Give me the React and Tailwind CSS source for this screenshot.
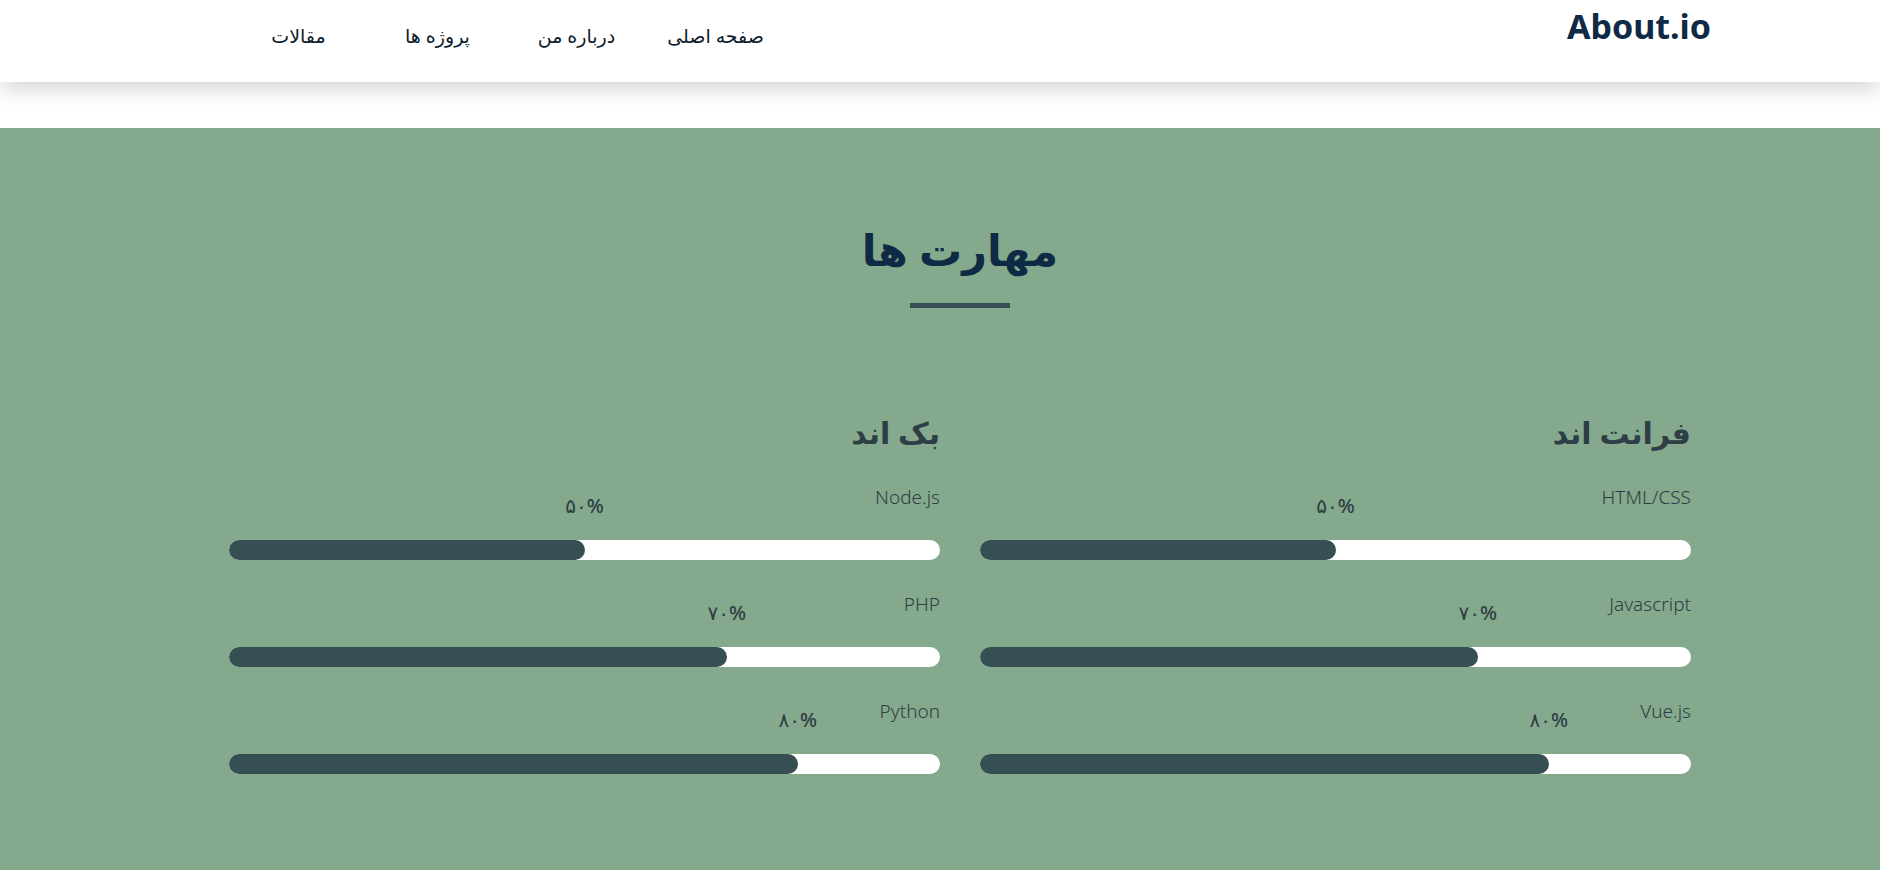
const navItems = ['صفحه اصلی', 'درباره من', 'پروژه ها', 'مقالات'];

const frontEnd = [
  { name: 'HTML/CSS', pct: 50, label: '۵۰%' },
  { name: 'Javascript', pct: 70, label: '۷۰%' },
  { name: 'Vue.js', pct: 80, label: '۸۰%' },
];

const backEnd = [
  { name: 'Node.js', pct: 50, label: '۵۰%' },
  { name: 'PHP', pct: 70, label: '۷۰%' },
  { name: 'Python', pct: 80, label: '۸۰%' },
];

function SkillBar({ name, pct, label }) {
  return (
    <div className="mb-[31px]">
      <p className="text-[19px] leading-[27px] font-light text-[#2f3e46]">{name}</p>
      <div dir="ltr" className="relative mt-[29px] h-[20px] rounded-full bg-white">
        <div className="h-full rounded-full bg-[#354f52]" style={{ width: `${pct}%` }} />
        <span
          dir="rtl"
          className="absolute top-[-49px] -translate-x-1/2 text-[20px] leading-[30px] font-medium text-[#2f3e46] whitespace-nowrap"
          style={{ left: `${pct}%` }}
        >
          {label}
        </span>
      </div>
    </div>
  );
}

function SkillColumn({ title, skills }) {
  return (
    <div>
      <h3 className="text-[30px] leading-[48px] font-bold text-[#2f3e46] mb-[27px]">{title}</h3>
      {skills.map((s) => (
        <SkillBar key={s.name} {...s} />
      ))}
    </div>
  );
}

export default function App() {
  return (
    <div dir="rtl" className="min-h-screen flex flex-col bg-white font-['Noto_Sans','DejaVu_Sans',sans-serif]">
      {/* Header */}
      <header className="relative z-10 h-[82px] bg-white shadow-[0_6px_22px_rgba(0,0,0,0.18)]">
        <div className="flex justify-between items-start pr-[169px] pl-[229px]">
          <a href="#" dir="ltr" className="pt-[9px] text-[34px] leading-none font-bold text-[#0f2a44]">
            About.io
          </a>
          <nav className="flex pt-[22px]">
            {navItems.map((item) => (
              <a key={item} href="#" className="w-[139px] text-center text-[19px] font-medium text-[#0d1b2a]">
                {item}
              </a>
            ))}
          </nav>
        </div>
      </header>

      {/* Skills */}
      <section className="flex-1 mt-[46px] bg-[#84a98c] pt-[86px] pb-[66px]">
        <div className="mr-[189px] ml-[229px]">
          <h2 className="text-center text-[43px] leading-[72px] font-bold text-[#0f2a44]">مهارت ها</h2>
          <div className="mx-auto mt-[17px] h-[5px] w-[100px] bg-[#354f52]" />

          <div className="mt-[101px] grid grid-cols-2 gap-[40px]">
            <SkillColumn title="فرانت اند" skills={frontEnd} />
            <SkillColumn title="بک اند" skills={backEnd} />
          </div>
        </div>
      </section>
    </div>
  );
}
